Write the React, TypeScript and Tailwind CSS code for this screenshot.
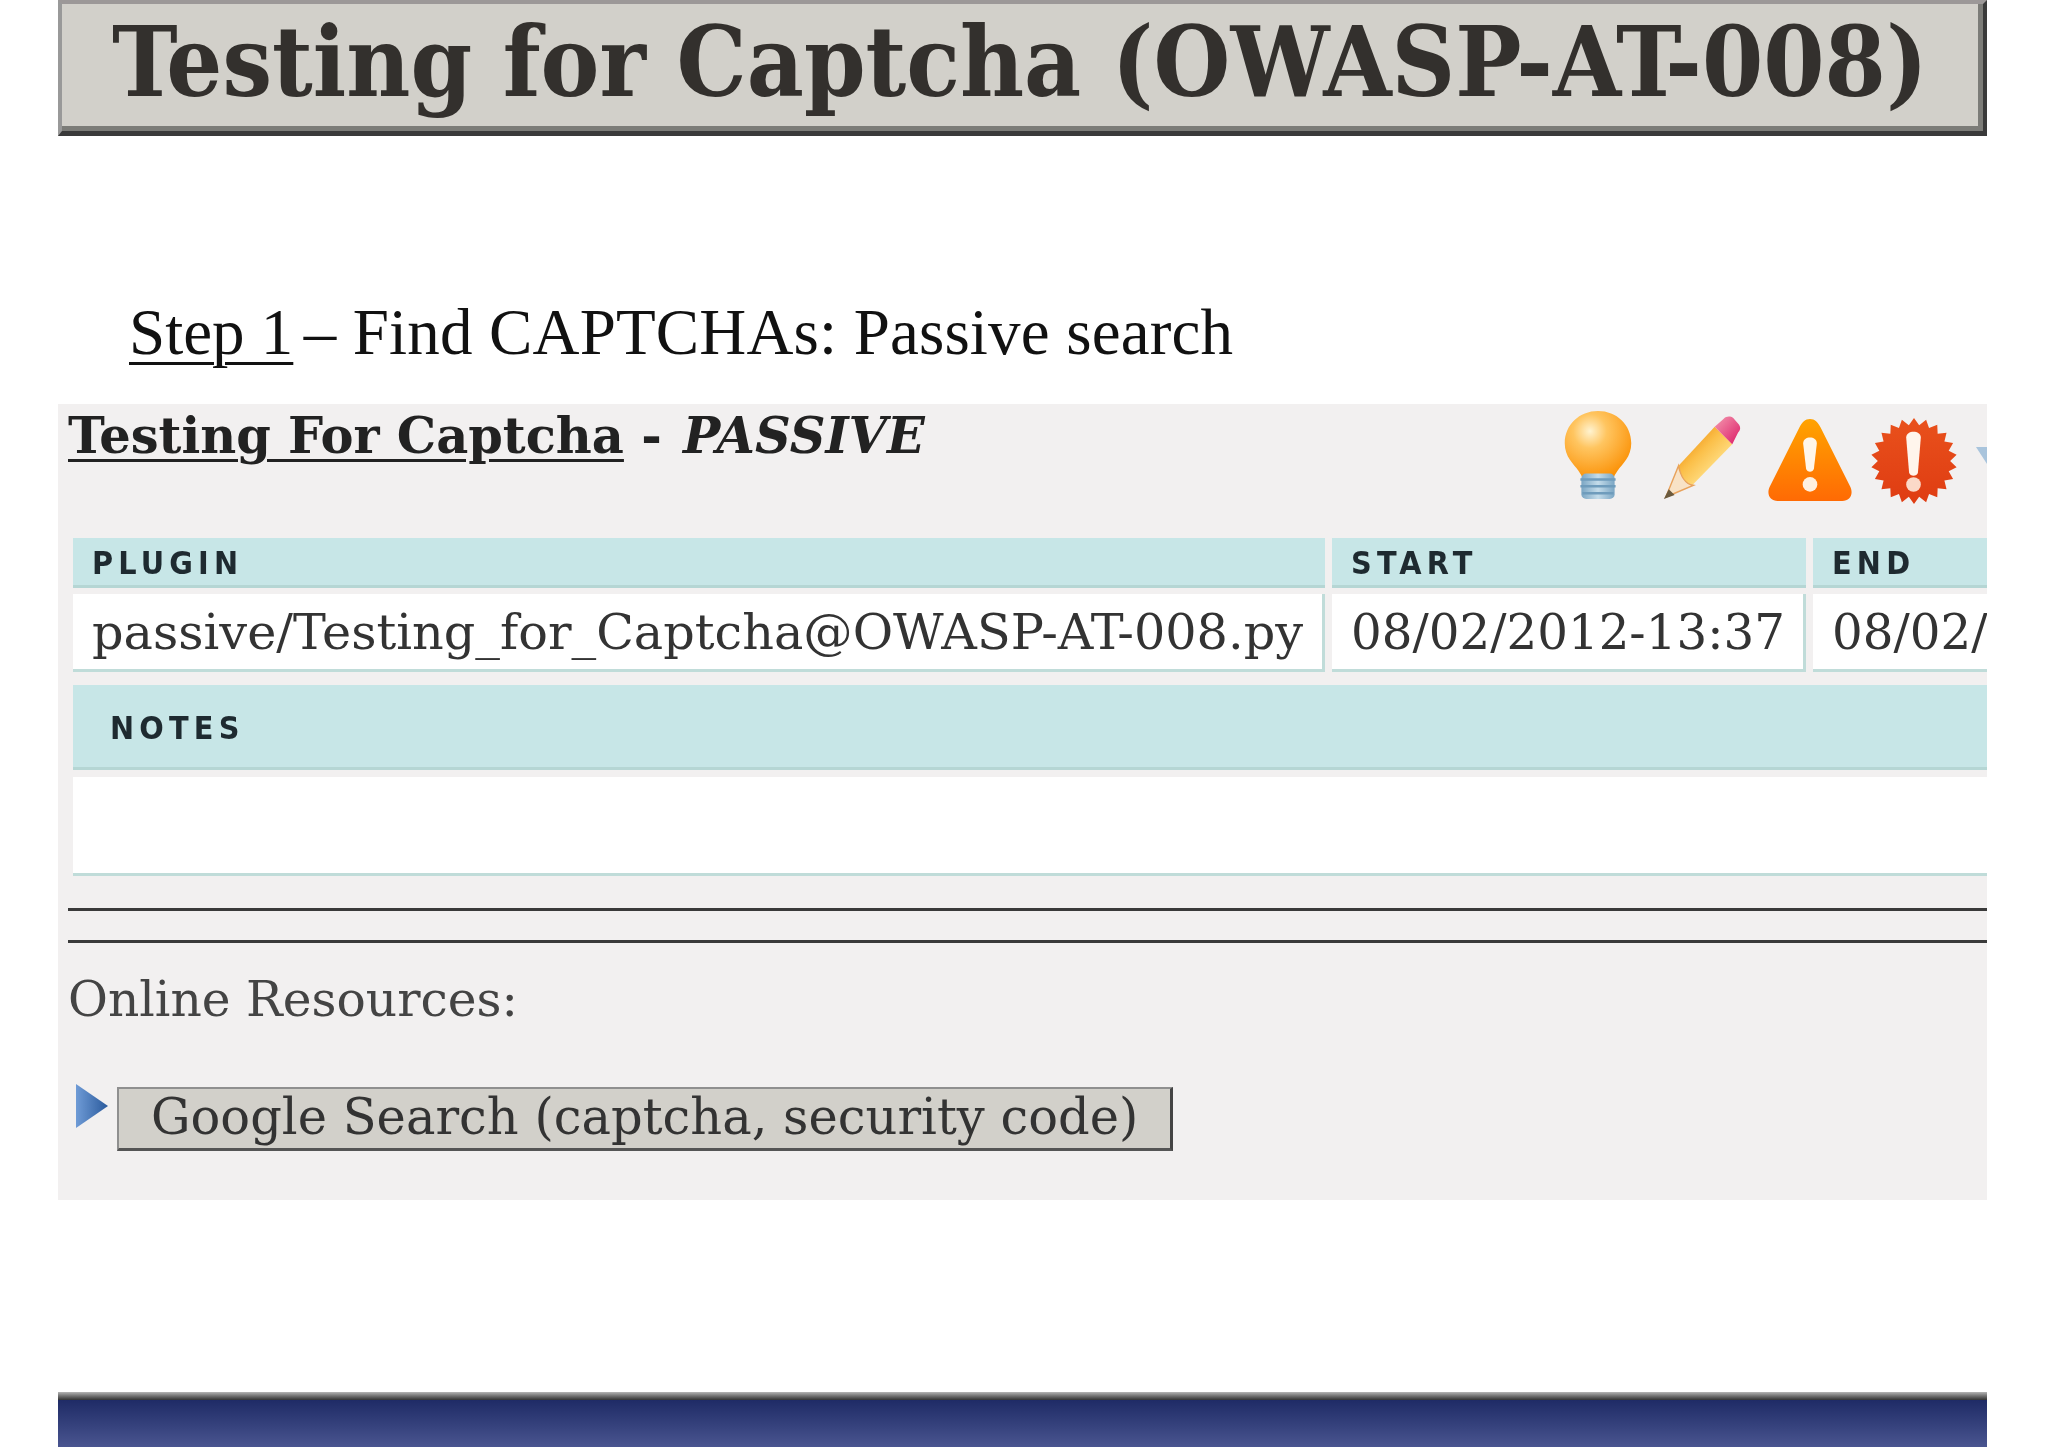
import React from "react";

const dj = "font-['DejaVu_Serif',serif]";
const cond = "font-['DejaVu_Serif_Condensed','DejaVu_Serif',serif]";
const sans = "font-['DejaVu_Sans_Condensed','DejaVu_Sans',sans-serif]";

function Bulb() {
  return (
    <svg width="70" height="90" viewBox="0 0 70 92" className="shrink-0">
      <defs>
        <radialGradient id="bulb" cx="0.38" cy="0.3" r="0.72">
          <stop offset="0" stopColor="#fff3d0" />
          <stop offset="0.35" stopColor="#ffc560" />
          <stop offset="1" stopColor="#fb9208" />
        </radialGradient>
        <linearGradient id="base" x1="0" x2="1" y1="0" y2="0">
          <stop offset="0" stopColor="#7ba6c4" />
          <stop offset="0.5" stopColor="#c4dcea" />
          <stop offset="1" stopColor="#7ba6c4" />
        </linearGradient>
      </defs>
      <path d="M35 1C16 1 1 15 1 34c0 14 9 21 14 28 2 3 4 6 4 8h32c0-2 2-5 4-8 5-7 14-14 14-28C69 15 54 1 35 1Z" fill="url(#bulb)" />
      <rect x="18" y="65" width="34" height="26" rx="5" fill="url(#base)" />
      <path d="M17 71h36M17 78h36M19 85h32" stroke="#6f9cbc" strokeWidth="2.5" />
    </svg>
  );
}

function Pencil() {
  return (
    <svg width="80" height="84" viewBox="0 0 80 86" className="shrink-0">
      <defs>
        <linearGradient id="pen" x1="0.2" x2="0.7" y1="0.2" y2="0.7">
          <stop offset="0" stopColor="#ef8f12" />
          <stop offset="0.5" stopColor="#fbc04a" />
          <stop offset="1" stopColor="#ffdf86" />
        </linearGradient>
        <linearGradient id="rub" x1="0" x2="1" y1="0" y2="1">
          <stop offset="0" stopColor="#f49ab0" />
          <stop offset="1" stopColor="#dc1a66" />
        </linearGradient>
      </defs>
      <path d="M17 52 54 12 72 30 31 72 7 79Z" fill="url(#pen)" />
      <path d="M54 12 63 4C66 1 70 1 73 3L79 10C81 13 80 16 78 18L72 30Z" fill="url(#rub)" />
      <path d="M17 52 4 84 32 72C24 71 19 62 17 52Z" fill="#f8e2c6" stroke="#e8a25c" strokeWidth="1.5" />
      <path d="M7 76 2 86 13 82Z" fill="#6b5a3e" />
    </svg>
  );
}

function Warning() {
  return (
    <svg width="88" height="84" viewBox="0 0 88 86" className="shrink-0">
      <defs>
        <linearGradient id="warn" x1="0" x2="0" y1="0" y2="1">
          <stop offset="0" stopColor="#ffa300" />
          <stop offset="1" stopColor="#ff6a04" />
        </linearGradient>
      </defs>
      <path d="M44 1c5 0 8 3 11 9l30 60c4 8 0 15-8 15H11C3 85-1 78 3 70L33 10c3-6 6-9 11-9Z" fill="url(#warn)" />
      <path d="M37 26c0-8 14-8 14 0l-3 26c-1 4-7 4-8 0Z" fill="#fff6ea" />
      <circle cx="44" cy="68" r="7.5" fill="#fff0e0" />
    </svg>
  );
}

function Burst() {
  const pts: string[] = [];
  const n = 22;
  for (let i = 0; i < n * 2; i++) {
    const r = i % 2 === 0 ? 44 : 37;
    const a = (i / (n * 2)) * Math.PI * 2;
    pts.push(`${(44 + r * Math.sin(a)).toFixed(1)},${(44 - r * Math.cos(a)).toFixed(1)}`);
  }
  return (
    <svg width="88" height="86" viewBox="0 0 88 88" className="shrink-0">
      <defs>
        <linearGradient id="burst" x1="0" x2="0" y1="0" y2="1">
          <stop offset="0" stopColor="#e9511c" />
          <stop offset="1" stopColor="#df3c12" />
        </linearGradient>
      </defs>
      <polygon points={pts.join(" ")} fill="url(#burst)" />
      <path d="M36 20c0-8 15-8 15 0l-3 36c-1 4-8 4-9 0Z" fill="#fff5ec" />
      <circle cx="43.500" cy="68" r="7.500" fill="#fbd9c8" />
    </svg>
  );
}

function Arrow() {
  return (
    <svg width="32" height="44" viewBox="0 0 32 44" className="shrink-0">
      <defs>
        <linearGradient id="arr" x1="0" x2="1" y1="0" y2="0">
          <stop offset="0" stopColor="#6f9bd6" />
          <stop offset="1" stopColor="#2a5a9c" />
        </linearGradient>
      </defs>
      <path d="M0 0 32 22 0 44Z" fill="url(#arr)" />
    </svg>
  );
}

function Head({ children }: { children: React.ReactNode }) {
  return (
    <div className={`h-[50px] bg-[#c7e6e7] border-b-[3px] border-[#b5d6d4] pl-[19px] pt-[8px] text-[32px] leading-[34px] font-bold tracking-[5.2px] text-[#1e2a30] overflow-hidden whitespace-nowrap ${sans}`}>
      {children}
    </div>
  );
}

function Cell({ children, tight, edge }: { children: React.ReactNode; tight?: boolean; edge?: boolean }) {
  return (
    <div className={`h-[78px] bg-white border-b-[3px] border-[#c0dcd9] pl-[19px] pt-[8px] leading-[60px] text-[#333] overflow-hidden whitespace-nowrap ${tight ? "text-[48.3px]" : "text-[49.3px]"} ${edge ? "border-r-[3px]" : ""} ${dj}`}>
      {children}
    </div>
  );
}

export default function App() {
  return (
    <div className="w-[2048px] h-[1448px] bg-white flex flex-col pl-[58px] pr-[61px] overflow-hidden blur-[0.6px]">
      <div className="h-[136px] shrink-0 border-t-[4px] border-l-[4px] border-t-[#9c9898] border-l-[#999] border-r-[4px] border-b-[5px] border-r-[#3a3a3a] border-b-[#3a3a3a]">
        <div className={`h-full bg-[#d2d0ca] border-r-[5px] border-b-[5px] border-[#7c7c78] flex items-center pl-[50px] pb-[7px] text-[98px] leading-none font-bold text-[#33302d] whitespace-nowrap overflow-hidden ${cond}`}>
          Testing for Captcha (OWASP-AT-008)
        </div>
      </div>

      <div className="h-[268px] shrink-0 pl-[71px] pt-[154px] font-['Liberation_Serif',serif] text-[65px] leading-[84px] text-[#111] whitespace-nowrap">
        <span className="underline decoration-[3px] underline-offset-[8px]">Step 1</span>
        <span className="ml-[-6px] tracking-[0.16px]"> – Find CAPTCHAs: Passive search</span>
      </div>

      <div className="h-[796px] shrink-0 bg-[#f2f0f0] pl-[10px] overflow-hidden flex flex-col">
        <div className="h-[134px] shrink-0 flex justify-between">
          <div className={`pt-[1px] text-[49.5px] leading-[62px] font-bold text-[#222] whitespace-nowrap ${dj}`}>
            <span className="underline decoration-[3px] underline-offset-[6px]">Testing For Captcha</span> - <em className="ml-[4px]">PASSIVE</em>
          </div>
          <div className="flex items-start -mr-[21px] pt-[6px]">
            <Bulb />
            <div className="ml-[28px] pt-[5px]"><Pencil /></div>
            <div className="ml-[25px] pt-[8px]"><Warning /></div>
            <div className="ml-[16px] pt-[8px]"><Burst /></div>
            <svg width="32" height="20" viewBox="0 0 32 20" className="ml-[18px] mt-[37px] shrink-0"><path d="M0 0h18L11 17Z" fill="#a9c4dc" /></svg>
          </div>
        </div>

        <div className="pl-[5px]">
          <div className="grid grid-cols-[1252px_474px_1fr] gap-x-[7px] gap-y-[6px]">
            <Head>PLUGIN</Head>
            <Head>START</Head>
            <Head>END</Head>
            <Cell edge>passive/Testing_for_Captcha@OWASP-AT-008.py</Cell>
            <Cell edge tight>08/02/2012-13:37</Cell>
            <Cell tight>08/02/2012-13:37</Cell>
          </div>
          <div className={`mt-[13px] h-[85px] bg-[#c7e6e7] border-b-[3px] border-[#b5d6d4] pl-[37px] pt-[26px] text-[32px] leading-[34px] font-bold tracking-[5.2px] text-[#1e2a30] ${sans}`}>
            NOTES
          </div>
          <div className="mt-[7px] h-[99px] bg-white border-b-[3px] border-[#c0dcd9]" />
        </div>

        <div className="mt-[32px] h-[3px] bg-[#3a3a3a]" />
        <div className="mt-[29px] h-[3px] bg-[#3a3a3a]" />

        <div className={`mt-[26px] text-[48.7px] leading-[60px] text-[#444] whitespace-nowrap ${dj}`}>Online Resources:</div>

        <div className="mt-[58px] flex items-start pl-[8px] gap-[9px]">
          <div className="-mt-[3px]"><Arrow /></div>
          <div className={`h-[64px] w-[1056px] bg-[#d2d0ca] border-t-[2px] border-l-[2px] border-t-[#8f8f8f] border-l-[#8f8f8f] border-r-[3px] border-b-[3px] border-r-[#444] border-b-[#555] pl-[32px] text-[49.5px] leading-[56px] text-[#333] whitespace-nowrap overflow-hidden ${dj}`}>
            Google Search (captcha, security code)
          </div>
        </div>
      </div>

      <div className="mt-[192px] h-[55px] shrink-0 flex flex-col">
        <div className="h-[8px] bg-gradient-to-b from-[#b5b5b5] to-[#333]" />
        <div className="flex-1 bg-gradient-to-b from-[#1f2b66] to-[#4a5590]" />
      </div>
    </div>
  );
}
